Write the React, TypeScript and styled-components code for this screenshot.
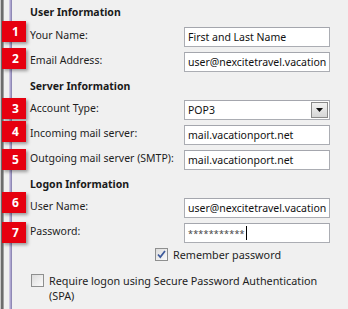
import styled, { createGlobalStyle } from 'styled-components';

const GlobalStyle = createGlobalStyle`
	html, body {
		margin: 0;
		padding: 0;
		background: #f0f0f0;
	}
	body {
		font-family: 'Noto Sans', 'Open Sans', sans-serif;
		font-size: 10.5px;
		color: #1e1e1e;
	}
`;

const Panel = styled.div`
	position: relative;
	width: 348px;
	height: 309px;
	box-sizing: border-box;
	padding-right: 18px;
	overflow: hidden;
	background: linear-gradient(
		to right,
		#c9c9c9 0 1px,
		#6c6c6c 1px 3px,
		#a0a0a0 3px 4px,
		#f0f0f0 4px 9px,
		#cbc5e0 9px 10px,
		#aca4cf 10px 11px,
		#8f89b5 11px 12px,
		#f0f0f0 12px
	);
`;

const SectionTitle = styled.div<{ $h: number }>`
	height: ${(p) => p.$h}px;
	display: flex;
	align-items: center;
	padding-left: 30px;
	font-weight: 700;
	color: #1a1a1a;
`;

const FieldRow = styled.div`
	display: grid;
	grid-template-columns: 30px 1fr 146px;
	align-items: center;
	height: 25px;
`;

const Badge = styled.span<{ $lift: number }>`
	width: 24px;
	height: 21px;
	margin-left: 2px;
	box-sizing: border-box;
	padding-left: 3px;
	display: flex;
	align-items: center;
	justify-content: center;
	background: #e6000f;
	color: #fff;
	font-weight: 700;
	font-size: 12px;
	box-shadow: 2px 2px 3px rgba(0, 0, 0, 0.35);
	transform: translateY(${(p) => -p.$lift}px);
	position: relative;
	z-index: 1;
`;

const Label = styled.span`
	white-space: nowrap;
	transform: translateY(-2px);
`;

const TextBox = styled.div`
	height: 20px;
	box-sizing: border-box;
	border: 1px solid #abadb3;
	border-top-color: #a4a6ad;
	background: #fff;
	padding: 0 3px;
	display: flex;
	align-items: center;
	white-space: nowrap;
	overflow: hidden;
	font-size: 10.5px;
	color: #111;
`;

const SelectBox = styled(TextBox)`
	justify-content: space-between;
	padding-right: 1px;
`;

const DropButton = styled.span`
	width: 17px;
	height: 16px;
	box-sizing: border-box;
	border: 1px solid #8a8a8a;
	background: linear-gradient(#f2f2f2, #d6d6d6);
	display: flex;
	align-items: center;
	justify-content: center;
`;

const Stars = styled.span`
	font-size: 9px;
	letter-spacing: 0.2px;
	color: #444;
	transform: translateY(1px);
`;

const Caret = styled.span`
	width: 1px;
	height: 14px;
	background: #000;
	margin-left: 1px;
`;

const CheckRow = styled.label<{ $indent: number }>`
	display: flex;
	align-items: flex-start;
	gap: 5px;
	padding-left: ${(p) => p.$indent}px;
	line-height: 15px;
	font-size: 10.8px;
`;

const Box = styled.span`
	flex: none;
	width: 13px;
	height: 13px;
	box-sizing: border-box;
	border: 1px solid #8e8f8f;
	background: linear-gradient(135deg, #dcdcdc, #fbfbfb);
	display: flex;
	align-items: center;
	justify-content: center;
	margin-top: 1px;
`;

const fields = [
	{ n: 1, label: 'Your Name:', value: 'First and Last Name', lift: 5 },
	{ n: 2, label: 'Email Address:', value: 'user@nexcitetravel.vacation', lift: 3 },
];

const servers = [
	{ n: 4, label: 'Incoming mail server:', value: 'mail.vacationport.net', lift: 3 },
	{ n: 5, label: 'Outgoing mail server (SMTP):', value: 'mail.vacationport.net', lift: 0 },
];

export default function App() {
	return (
		<>
			<GlobalStyle />
			<Panel>
				<SectionTitle $h={24}>User Information</SectionTitle>
				{fields.map((f) => (
					<FieldRow key={f.n}>
						<Badge $lift={f.lift}>{f.n}</Badge>
						<Label>{f.label}</Label>
						<TextBox>{f.value}</TextBox>
					</FieldRow>
				))}
				<SectionTitle $h={23}>Server Information</SectionTitle>
				<FieldRow>
					<Badge $lift={1}>3</Badge>
					<Label>Account Type:</Label>
					<SelectBox>
						<span>POP3</span>
						<DropButton>
							<svg width="7" height="4" viewBox="0 0 7 4">
								<path d="M0 0h7L3.5 4z" fill="#111" />
							</svg>
						</DropButton>
					</SelectBox>
				</FieldRow>
				{servers.map((f) => (
					<FieldRow key={f.n}>
						<Badge $lift={f.lift}>{f.n}</Badge>
						<Label>{f.label}</Label>
						<TextBox>{f.value}</TextBox>
					</FieldRow>
				))}
				<SectionTitle $h={23}>Logon Information</SectionTitle>
				<FieldRow>
					<Badge $lift={5}>6</Badge>
					<Label>User Name:</Label>
					<TextBox>user@nexcitetravel.vacation</TextBox>
				</FieldRow>
				<FieldRow>
					<Badge $lift={0}>7</Badge>
					<Label>Password:</Label>
					<TextBox>
						<Stars>***********</Stars>
						<Caret />
					</TextBox>
				</FieldRow>
				<CheckRow $indent={155} style={{ marginTop: 2 }}>
					<Box>
						<svg width="9" height="9" viewBox="0 0 9 9">
							<path d="M1 4.5l2.3 2.6L8 1" stroke="#3d5a9c" strokeWidth="1.7" fill="none" />
						</svg>
					</Box>
					<span>Remember password</span>
				</CheckRow>
				<CheckRow $indent={31} style={{ marginTop: 11 }}>
					<Box />
					<span>
						Require logon using Secure Password Authentication
						<br />
						(SPA)
					</span>
				</CheckRow>
			</Panel>
		</>
	);
}
